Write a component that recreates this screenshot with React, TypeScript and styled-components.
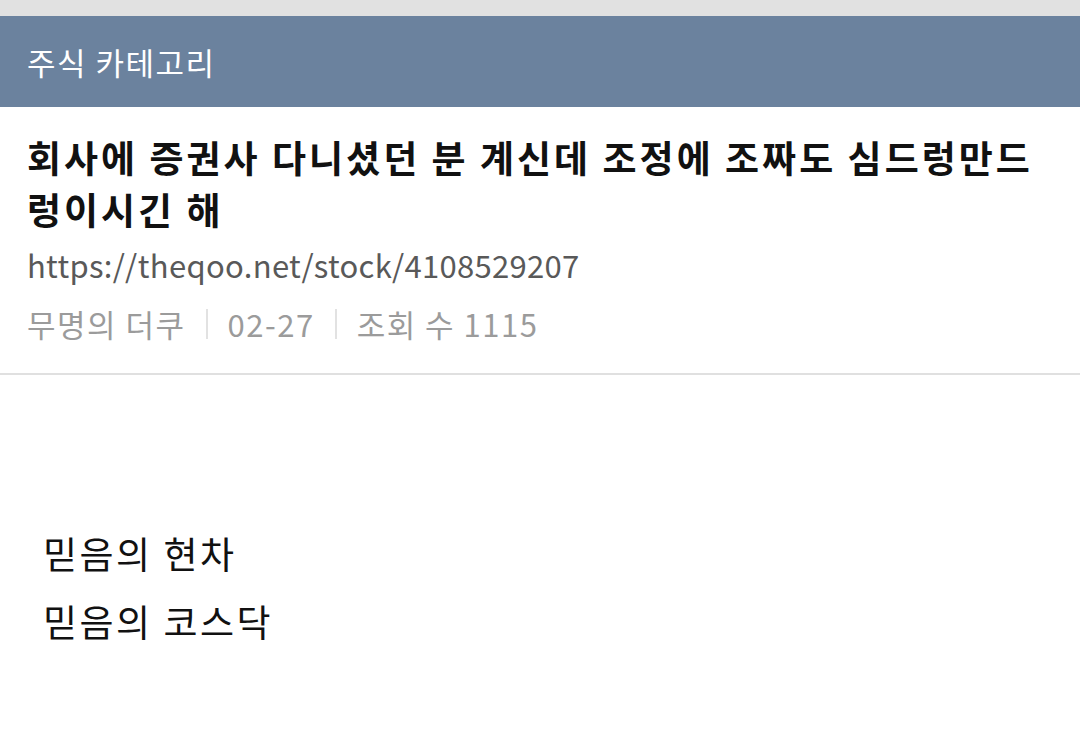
import React from 'react';
import styled, { createGlobalStyle } from 'styled-components';

const GlobalStyle = createGlobalStyle`
  html, body {
    margin: 0;
    padding: 0;
    background: #ffffff;
  }
  body {
    font-family: "Noto Sans CJK KR", "Noto Sans", sans-serif;
  }
`;

const Page = styled.div`
  width: 1080px;
  min-height: 733px;
  display: flex;
  flex-direction: column;
  background: #ffffff;
`;

const StatusStrip = styled.div`
  height: 16px;
  background: #e1e1e1;
`;

const CategoryBar = styled.div`
  height: 91px;
  background: #6b829e;
  display: flex;
  align-items: center;
  padding: 0 27px;
`;

const CategoryName = styled.h2`
  margin: 0;
  font-size: 31px;
  font-weight: 400;
  color: #ffffff;
  letter-spacing: 1.5px;
`;

const PostHead = styled.header`
  padding: 24px 27px 27px;
  border-bottom: 2px solid #e0e0e0;
  display: flex;
  flex-direction: column;
`;

const PostTitle = styled.h1`
  margin: 0;
  font-size: 37px;
  line-height: 52px;
  font-weight: 700;
  color: #111111;
  letter-spacing: 3px;
  word-break: break-all;
`;

const PostLink = styled.div`
  margin-top: 6px;
  font-size: 31px;
  line-height: 48px;
  color: #595959;
  letter-spacing: 0.3px;
`;

const MetaRow = styled.div`
  margin-top: 13px;
  display: flex;
  align-items: center;
  font-size: 31px;
  line-height: 44px;
  color: #9b9b9b;
  letter-spacing: 1.5px;
`;

const Divider = styled.span`
  width: 2px;
  height: 30px;
  background: #e2e2e2;
  margin: 0 20px;
`;

const PostBody = styled.article`
  padding: 144px 43px 0;
  display: flex;
  flex-direction: column;
`;

const BodyLine = styled.p`
  margin: 0;
  font-size: 37px;
  line-height: 68px;
  font-weight: 400;
  color: #111111;
  letter-spacing: 2.5px;
`;

const meta = ['무명의 더쿠', '02-27', '조회 수 1115'];
const lines = ['믿음의 현차', '믿음의 코스닥'];

export default function App() {
  return (
    <Page>
      <GlobalStyle />
      <StatusStrip />
      <CategoryBar>
        <CategoryName>주식 카테고리</CategoryName>
      </CategoryBar>
      <PostHead>
        <PostTitle>회사에 증권사 다니셨던 분 계신데 조정에 조짜도 심드렁만드렁이시긴 해</PostTitle>
        <PostLink>https://theqoo.net/stock/4108529207</PostLink>
        <MetaRow>
          {meta.map((item, i) => (
            <React.Fragment key={item}>
              {i > 0 && <Divider />}
              <span>{item}</span>
            </React.Fragment>
          ))}
        </MetaRow>
      </PostHead>
      <PostBody>
        {lines.map(line => (
          <BodyLine key={line}>{line}</BodyLine>
        ))}
      </PostBody>
    </Page>
  );
}
